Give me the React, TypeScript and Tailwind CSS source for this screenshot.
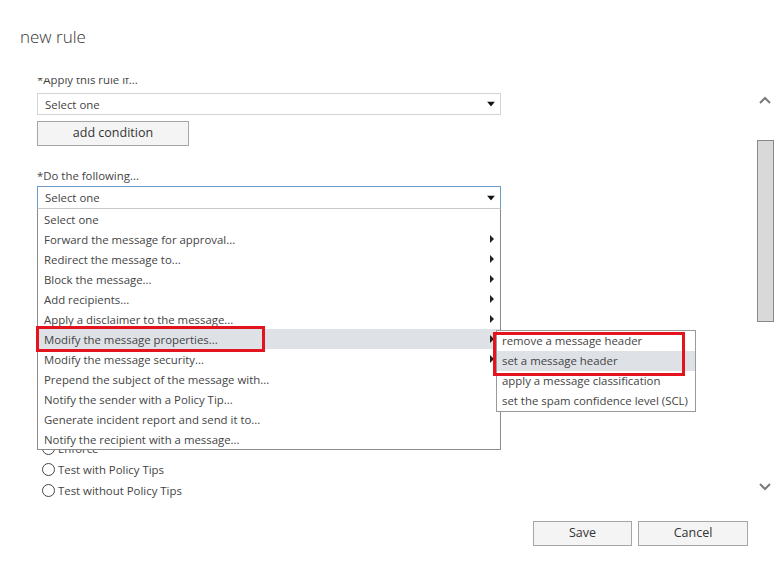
import React from "react";

const actions = [
  { label: "Select one", sub: false },
  { label: "Forward the message for approval...", sub: true },
  { label: "Redirect the message to...", sub: true },
  { label: "Block the message...", sub: true },
  { label: "Add recipients...", sub: true },
  { label: "Apply a disclaimer to the message...", sub: true },
  { label: "Modify the message properties...", sub: true, active: true },
  { label: "Modify the message security...", sub: true },
  { label: "Prepend the subject of the message with...", sub: false },
  { label: "Notify the sender with a Policy Tip...", sub: false },
  { label: "Generate incident report and send it to...", sub: false },
  { label: "Notify the recipient with a message...", sub: false },
];

const props = [
  { label: "remove a message header" },
  { label: "set a message header", active: true },
  { label: "apply a message classification" },
  { label: "set the spam confidence level (SCL)" },
];

function DownTriangle() {
  return (
    <svg width="8" height="5" viewBox="0 0 8 5" className="absolute right-[5px] top-1/2 -translate-y-1/2">
      <path d="M0 0h8L4 5z" fill="#111" />
    </svg>
  );
}

function RightTriangle() {
  return (
    <svg width="4" height="8" viewBox="0 0 4 8" className="absolute right-[6px] top-1/2 -translate-y-1/2">
      <path d="M0 0v8l4-4z" fill="#222" />
    </svg>
  );
}

function Chevron({ up }: { up?: boolean }) {
  return (
    <svg width="12" height="8" viewBox="0 0 12 8">
      <path d={up ? "M1 7l5-5 5 5" : "M1 1l5 5 5-5"} fill="none" stroke="#7a7a7a" strokeWidth="2" />
    </svg>
  );
}

function Radio({ label }: { label: string }) {
  return (
    <div className="flex items-center h-[21px] pl-[5px] gap-[3px]">
      <span className="w-[13px] h-[13px] rounded-full border border-[#444] bg-white" />
      <span>{label}</span>
    </div>
  );
}

export default function App() {
  return (
    <div className="w-[780px] h-[579px] bg-white text-[#444] text-[11.4px] font-['Open_Sans',sans-serif] overflow-hidden">
      <div className="h-[78px] pl-5 pt-[25px]">
        <h1 className="text-[17px] font-light text-[#333] leading-[24px]">new rule</h1>
      </div>

      <div className="flex h-[425px]">
        <div className="flex-1 relative overflow-hidden">
          <div className="pl-[37px] -mt-[6px]">
            <div className="leading-[16px] h-[16px]">*Apply this rule if...</div>
            <div className="relative w-[464px] h-[22px] mt-[5px] border border-[#d4d4d4] flex items-center pl-[7px] pt-px">
              Select one
              <DownTriangle />
            </div>
            <button className="w-[152px] h-[25px] mt-[6px] bg-[#f4f4f4] border border-[#a6a6a6] text-[12.5px] text-[#333]">
              add condition
            </button>
            <div className="leading-[16px] h-[16px] mt-[22px]">*Do the following...</div>
            <div className="relative w-[464px]">
              <div className="relative h-[23px] mt-[2px] border border-[#6d9cc6] flex items-center pl-[7px] pt-px">
                Select one
                <DownTriangle />
              </div>
              <div className="absolute left-0 top-[22px] w-[464px] bg-white border border-[#8c8c8c] border-t-[#c8c8c8] z-10">
                {actions.map((a) => (
                  <div
                    key={a.label}
                    className={`relative h-[20px] leading-[20px] pl-[6px] pt-px ${a.active ? "bg-[#dee1e6]" : ""}`}
                  >
                    {a.label}
                    {a.sub && <RightTriangle />}
                  </div>
                ))}
                <div className="absolute left-[458px] top-[121px] w-[200px] bg-white border border-[#9a9a9a] z-20">
                  {props.map((p) => (
                    <div
                      key={p.label}
                      className={`h-[20px] leading-[20px] pl-[5px] whitespace-nowrap ${p.active ? "bg-[#dee1e6]" : ""}`}
                    >
                      {p.label}
                    </div>
                  ))}
                </div>
              </div>
            </div>
            <div className="h-[229px]" />
            <Radio label="Enforce" />
            <Radio label="Test with Policy Tips" />
            <Radio label="Test without Policy Tips" />
          </div>

          <div className="absolute left-[36px] top-[248px] w-[229px] h-[26px] border-[3px] border-[#e3141e] z-30" />
          <div className="absolute left-[493px] top-[254px] w-[192px] h-[44px] border-[3px] border-[#e3141e] z-30" />
        </div>

        <div className="w-[18px] mr-[6px] flex flex-col items-center">
          <div className="mt-[18px] h-[8px] flex items-center"><Chevron up /></div>
          <div className="mt-[36px] w-[17px] h-[182px] bg-[#d9d9d9] border border-[#888]" />
          <div className="mt-[161px] h-[8px] flex items-center"><Chevron /></div>
        </div>
      </div>

      <div className="flex justify-end gap-[6px] pr-[32px] pt-[18px]">
        <button className="w-[99px] h-[25px] bg-[#f4f4f4] border border-[#a6a6a6] text-[12.5px] text-[#333]">Save</button>
        <button className="w-[110px] h-[25px] bg-[#f4f4f4] border border-[#a6a6a6] text-[12.5px] text-[#333]">Cancel</button>
      </div>
    </div>
  );
}
